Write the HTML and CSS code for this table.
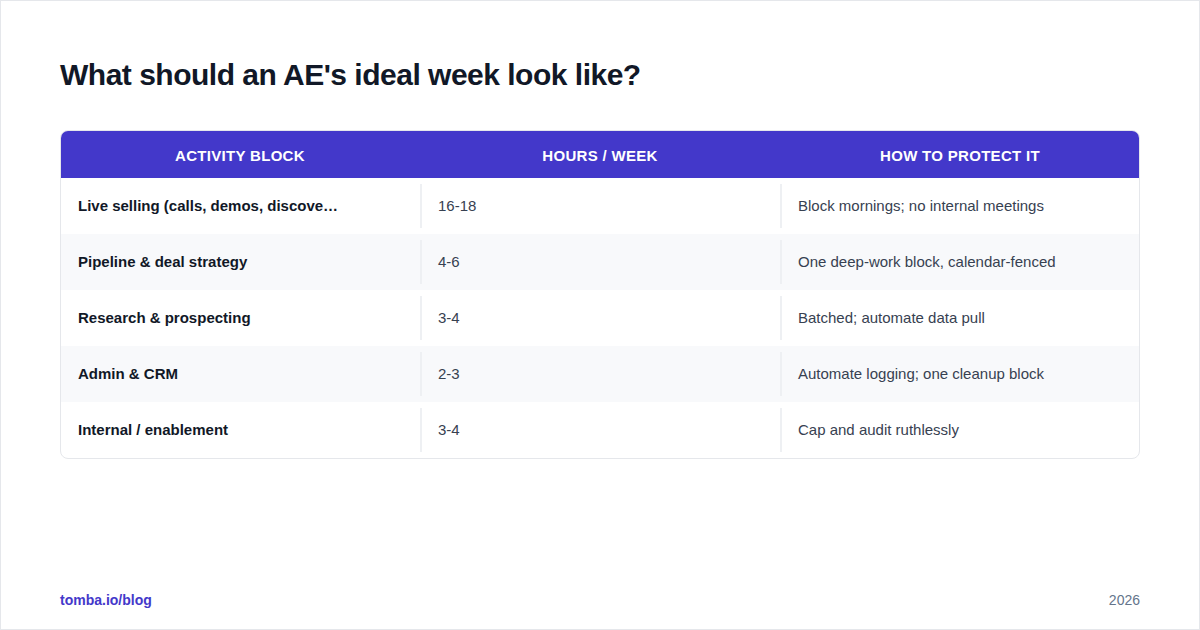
FILE: index.html
```html
<!DOCTYPE html>
<html>
<head>
<meta charset="utf-8">
<link rel="stylesheet" href="styles.css">
</head>
<body>
<div class="page">
  <h1 class="title">What should an AE's ideal week look like?</h1>
  <div class="table">
    <div class="row head">
      <div class="cell">ACTIVITY BLOCK</div>
      <div class="cell">HOURS / WEEK</div>
      <div class="cell">HOW TO PROTECT IT</div>
    </div>
    <div class="row">
      <div class="cell name">Live selling (calls, demos, discove…</div>
      <div class="cell val">16-18</div>
      <div class="cell val">Block mornings; no internal meetings</div>
    </div>
    <div class="row alt">
      <div class="cell name">Pipeline &amp; deal strategy</div>
      <div class="cell val">4-6</div>
      <div class="cell val">One deep-work block, calendar-fenced</div>
    </div>
    <div class="row">
      <div class="cell name">Research &amp; prospecting</div>
      <div class="cell val">3-4</div>
      <div class="cell val">Batched; automate data pull</div>
    </div>
    <div class="row alt">
      <div class="cell name">Admin &amp; CRM</div>
      <div class="cell val">2-3</div>
      <div class="cell val">Automate logging; one cleanup block</div>
    </div>
    <div class="row">
      <div class="cell name">Internal / enablement</div>
      <div class="cell val">3-4</div>
      <div class="cell val">Cap and audit ruthlessly</div>
    </div>
  </div>
  <div class="footer">
    <span class="brand">tomba.io/blog</span>
    <span class="year">2026</span>
  </div>
</div>
</body>
</html>
```

FILE: styles.css
```css
* { box-sizing: border-box; }
html, body { margin: 0; padding: 0; }
body {
  font-family: "Liberation Sans", Arial, sans-serif;
  background: #ffffff;
}
.page {
  width: 1200px;
  height: 630px;
  border: 1px solid #e5e7eb;
  padding: 0 59px;
  display: flex;
  flex-direction: column;
}
.title {
  margin: 55px 0 0;
  font-size: 30px;
  line-height: 38px;
  font-weight: 700;
  color: #111827;
  letter-spacing: -0.5px;
}
.table {
  margin-top: 36px;
  border: 1px solid #e5e7eb;
  border-radius: 8px;
  overflow: hidden;
}
.row {
  display: grid;
  grid-template-columns: 359px 360px 1fr;
  height: 56px;
  align-items: stretch;
}
.row.alt { background: #f8f9fb; }
.row.head {
  height: 48px;
  background: #4338ca;
  margin: -1px -1px 0;
  grid-template-columns: 360px 360px 1fr;
}
.head .cell {
  color: #ffffff;
  font-weight: 700;
  font-size: 15px;
  letter-spacing: 0.3px;
  justify-content: center;
  padding: 2px 0 0;
  border: none;
  margin: 0;
}
.cell {
  display: flex;
  align-items: center;
  padding: 0 18px 2px;
  font-size: 15px;
  white-space: nowrap;
  overflow: hidden;
}
.cell.name {
  font-weight: 700;
  color: #111827;
  padding-left: 17px;
}
.cell.val {
  color: #374151;
  border-left: 2px solid #eef0f3;
  margin: 6px 0;
  padding-left: 16px;
}
.footer {
  margin-top: auto;
  padding-bottom: 21px;
  display: flex;
  justify-content: space-between;
  align-items: baseline;
  font-size: 14px;
}
.brand { color: #4338ca; font-weight: 700; }
.year { color: #64748b; }
```
